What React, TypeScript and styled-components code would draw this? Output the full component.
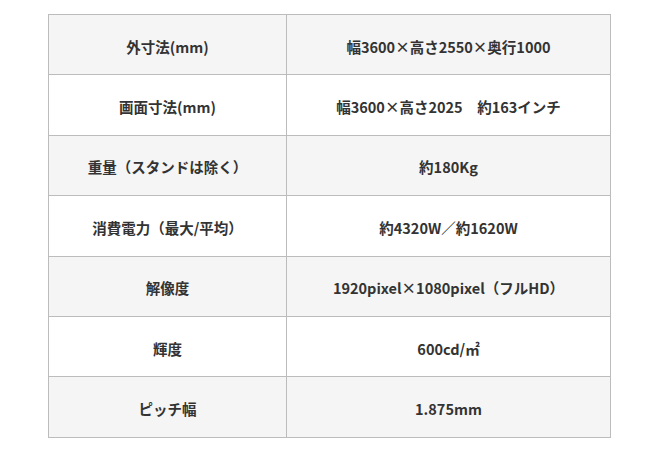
import React from "react";
import styled, { createGlobalStyle } from "styled-components";

const GlobalStyle = createGlobalStyle`
  html, body { margin: 0; padding: 0; background: #ffffff; }
  body { font-family: "Noto Sans CJK JP", "Noto Sans", sans-serif; }
`;

const Page = styled.div`
  padding: 14px 0 0 48px;
`;

const SpecTable = styled.table`
  width: 563px;
  border-collapse: collapse;
  table-layout: fixed;
  color: #333333;
  font-size: 14.5px;
  font-weight: 700;
`;

const Row = styled.tr<{ $shaded: boolean }>`
  background: ${(p) => (p.$shaded ? "#f5f5f5" : "#ffffff")};
`;

const Cell = styled.td<{ $head?: boolean }>`
  width: ${(p) => (p.$head ? "238px" : "auto")};
  height: 60.4px;
  padding: 4px 0 0;
  box-sizing: border-box;
  border: 1px solid #bcbcbc;
  text-align: center;
  vertical-align: middle;
  line-height: 20px;
`;

const rows: [string, string][] = [
  ["外寸法(mm)", "幅3600×高さ2550×奥行1000"],
  ["画面寸法(mm)", "幅3600×高さ2025　約163インチ"],
  ["重量（スタンドは除く）", "約180Kg"],
  ["消費電力（最大/平均）", "約4320W／約1620W"],
  ["解像度", "1920pixel×1080pixel（フルHD）"],
  ["輝度", "600cd/㎡"],
  ["ピッチ幅", "1.875mm"],
];

export default function App() {
  return (
    <>
      <GlobalStyle />
      <Page>
        <SpecTable>
          <tbody>
            {rows.map(([k, v], i) => (
              <Row key={k} $shaded={i % 2 === 0}>
                <Cell $head>{k}</Cell>
                <Cell>{v}</Cell>
              </Row>
            ))}
          </tbody>
        </SpecTable>
      </Page>
    </>
  );
}
